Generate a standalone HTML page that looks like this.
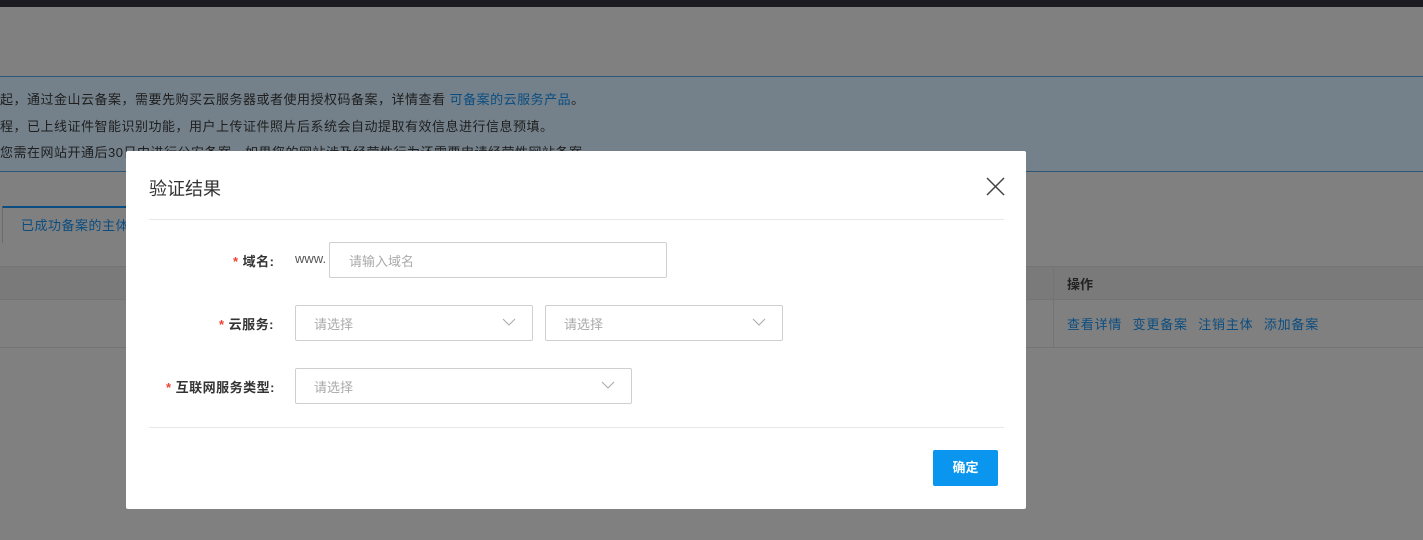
<!DOCTYPE html>
<html><head><meta charset="utf-8"><style>
*{margin:0;padding:0;box-sizing:border-box}
body{width:1423px;height:540px;overflow:hidden;background:#808080;position:relative;font-family:"Liberation Sans","Noto Sans CJK SC",sans-serif;font-size:13px}
.a{position:absolute}
.t{white-space:nowrap}
</style></head><body>
<div class="a" style="left:0;top:0;width:1423px;height:7px;background:#1b1b21"></div>
<div class="a" style="left:0;top:76px;width:1423px;height:96px;background:#74818b;border-top:1px solid #2c5578;border-bottom:1px solid #2c5578"></div>
<div class="a t" style="left:0;top:89px;color:#1e1e1e;letter-spacing:0.5px">起，通过金山云备案，需要先购买云服务器或者使用授权码备案，详情查看 <span style="color:#0b4d80">可备案的云服务产品</span>。</div>
<div class="a t" style="left:0;top:116px;color:#1e1e1e;letter-spacing:0.5px">程，已上线证件智能识别功能，用户上传证件照片后系统会自动提取有效信息进行信息预填。</div>
<div class="a t" style="left:0;top:142px;color:#1e1e1e;letter-spacing:0.5px">您需在网站开通后30日内进行公安备案，如果您的网站涉及经营性行为还需要申请经营性网站备案。</div>
<div class="a" style="left:2px;top:206px;width:200px;height:37px;border-top:2px solid #0b4d80;border-left:1px solid #6a6a6a"></div>
<div class="a t" style="left:21px;top:215px;color:#0b4d80;letter-spacing:0.5px">已成功备案的主体</div>
<div class="a" style="left:0;top:266px;width:1423px;height:34px;background:#7a7a7a;border-top:1px solid #747474;border-bottom:1px solid #747474"></div>
<div class="a" style="left:0;top:300px;width:1423px;height:48px;border-bottom:1px solid #747474"></div>
<div class="a" style="left:1053px;top:266px;width:1px;height:81px;background:#747474"></div>
<div class="a t" style="left:1067px;top:274px;color:#222;font-weight:bold">操作</div>
<div class="a t" style="left:1067px;top:314px;color:#0b4d80;word-spacing:6px;letter-spacing:0.8px">查看详情 变更备案 注销主体 添加备案</div>

<div class="a" style="left:126px;top:151px;width:900px;height:358px;background:#fff;border-radius:2px"></div>
<div class="a t" style="left:149px;top:175px;font-size:18px;color:#333">验证结果</div>
<svg class="a" style="left:986px;top:177px" width="19" height="19"><path d="M1 1L18 18M18 1L1 18" stroke="#444" stroke-width="1.5"/></svg>
<div class="a" style="left:149px;top:219px;width:855px;height:1px;background:#e8e8e8"></div>
<div class="a t" style="left:233px;top:251px;color:#333;font-weight:bold;letter-spacing:0.5px"><span style="color:#f04134">*</span> 域名:</div>
<div class="a t" style="left:295px;top:251px;color:#555">www.</div>
<div class="a" style="left:329px;top:242px;width:338px;height:36px;border:1px solid #cfcfcf;border-radius:2px"></div>
<div class="a t" style="left:349px;top:251px;color:#aaa">请输入域名</div>
<div class="a t" style="left:219px;top:314px;color:#333;font-weight:bold;letter-spacing:0.5px"><span style="color:#f04134">*</span> 云服务:</div>
<div class="a" style="left:295px;top:305px;width:238px;height:36px;border:1px solid #cfcfcf;border-radius:2px"></div>
<div class="a t" style="left:314px;top:314px;color:#aaa">请选择</div>
<svg class="a" style="left:502px;top:318px" width="14" height="8"><path d="M1 1L7 7L13 1" stroke="#aaa" fill="none"/></svg>
<div class="a" style="left:545px;top:305px;width:238px;height:36px;border:1px solid #cfcfcf;border-radius:2px"></div>
<div class="a t" style="left:564px;top:314px;color:#aaa">请选择</div>
<svg class="a" style="left:752px;top:318px" width="14" height="8"><path d="M1 1L7 7L13 1" stroke="#aaa" fill="none"/></svg>
<div class="a t" style="left:166px;top:377px;color:#333;font-weight:bold;letter-spacing:0.5px"><span style="color:#f04134">*</span> 互联网服务类型:</div>
<div class="a" style="left:295px;top:368px;width:337px;height:36px;border:1px solid #cfcfcf;border-radius:2px"></div>
<div class="a t" style="left:314px;top:377px;color:#aaa">请选择</div>
<svg class="a" style="left:601px;top:381px" width="14" height="8"><path d="M1 1L7 7L13 1" stroke="#aaa" fill="none"/></svg>
<div class="a" style="left:149px;top:427px;width:855px;height:1px;background:#e8e8e8"></div>
<div class="a t" style="left:933px;top:450px;width:65px;height:36px;background:#0a95ef;border-radius:2px;color:#fff;font-weight:bold;text-align:center;line-height:36px">确定</div>
</body></html>
